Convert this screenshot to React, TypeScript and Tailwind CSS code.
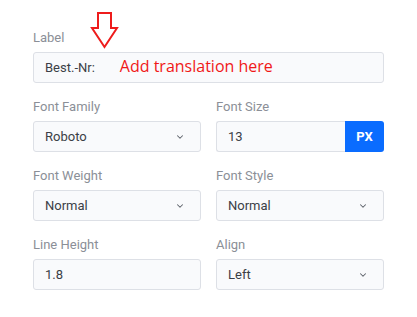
import { ChevronDown } from "lucide-react";

function FieldLabel({ children }: { children: React.ReactNode }) {
  return <div className="text-[13px] leading-[16px] text-[#8b8f97] mb-[6px]">{children}</div>;
}

function Select({ value }: { value: string }) {
  return (
    <div className="h-[31px] rounded-[3px] border border-[#dde0e6] bg-[#f9fafc] flex items-center justify-between pl-[11px] pr-[15px] text-[13px] text-[#3b3f46]">
      <span>{value}</span>
      <ChevronDown size={10} strokeWidth={2.5} className="text-[#5b6068]" />
    </div>
  );
}

function TextBox({ value }: { value: string }) {
  return (
    <div className="h-[31px] rounded-[3px] border border-[#dde0e6] bg-[#f9fafc] flex items-center pl-[11px] text-[13px] text-[#3b3f46]">
      {value}
    </div>
  );
}

export default function App() {
  const fields = [
    { label: "Font Family", kind: "select", value: "Roboto" },
    { label: "Font Size", kind: "px", value: "13" },
    { label: "Font Weight", kind: "select", value: "Normal" },
    { label: "Font Style", kind: "select", value: "Normal" },
    { label: "Line Height", kind: "text", value: "1.8" },
    { label: "Align", kind: "select", value: "Left" },
  ];

  return (
    <div className="relative w-[417px] h-[317px] bg-white font-['Roboto',sans-serif] pt-[30px] pl-[33px]">
      <div className="w-[351px]">
        <div className="mb-[16px]">
          <FieldLabel>Label</FieldLabel>
          <div className="h-[31px] rounded-[3px] border border-[#dde0e6] bg-[#f9fafc] flex items-center pl-[11px] text-[13px] text-[#3b3f46]">
            <span>Best.-Nr:</span>
            <span className="ml-[25px] -mt-[4px] font-['Open_Sans',sans-serif] text-[16px] text-[#f01818]">
              Add translation here
            </span>
          </div>
        </div>

        <div className="grid grid-cols-2 gap-x-[15px] gap-y-[16px]">
          {fields.map((f) => (
            <div key={f.label}>
              <FieldLabel>{f.label}</FieldLabel>
              {f.kind === "select" && <Select value={f.value} />}
              {f.kind === "text" && <TextBox value={f.value} />}
              {f.kind === "px" && (
                <div className="h-[31px] flex">
                  <div className="flex-1 rounded-l-[3px] border border-r-0 border-[#dde0e6] bg-[#f9fafc] flex items-center pl-[11px] text-[13px] text-[#3b3f46]">
                    {f.value}
                  </div>
                  <div className="w-[39px] rounded-r-[3px] bg-[#0a6cff] text-white text-[13px] font-bold flex items-center justify-center">
                    PX
                  </div>
                </div>
              )}
            </div>
          ))}
        </div>
      </div>

      {/* red annotation arrow */}
      <svg className="absolute left-[90px] top-[10px]" width="30" height="40" viewBox="0 0 30 40">
        <polygon
          points="8,3 21,3 21,18 27,18 14.5,37 2,18 8,18"
          fill="none"
          stroke="#ee1c1c"
          strokeWidth="2"
          strokeLinejoin="miter"
        />
      </svg>
    </div>
  );
}
